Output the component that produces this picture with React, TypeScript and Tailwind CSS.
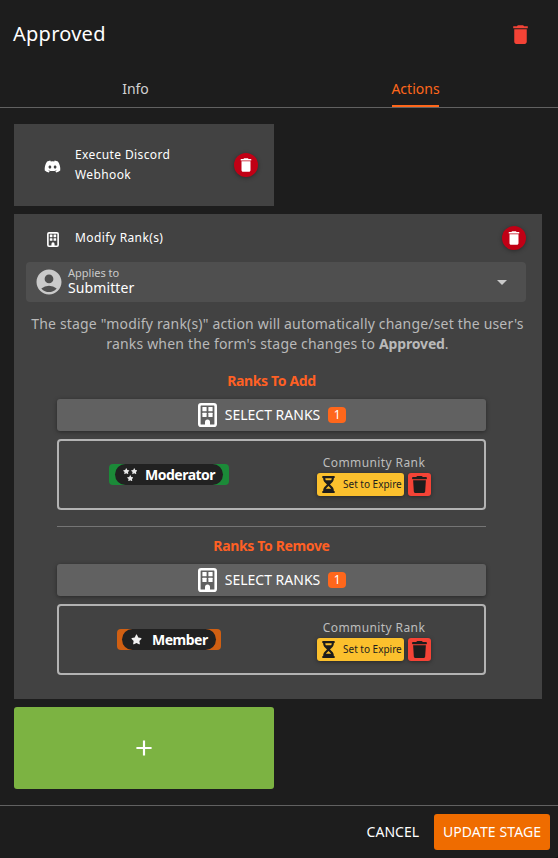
import type { ReactNode } from "react";
import { FaDiscord, FaTrash, FaHourglassHalf, FaStar } from "react-icons/fa6";
import { MdDelete, MdAccountCircle, MdArrowDropDown, MdAdd } from "react-icons/md";

function BuildingIcon({ className }: { className: string }) {
  return (
    <svg viewBox="0 0 19 24" className={className} fill="currentColor">
      <rect x="1.3" y="1.3" width="16.4" height="21.4" rx="1.8" fill="none" stroke="currentColor" strokeWidth="2.6" />
      <rect x="4.4" y="4" width="4.2" height="4.2" rx="0.5" />
      <rect x="10.4" y="4" width="4.2" height="4.2" rx="0.5" />
      <rect x="4.4" y="9.8" width="4.2" height="4.2" rx="0.5" />
      <rect x="10.4" y="9.8" width="4.2" height="4.2" rx="0.5" />
      <path d="M7 23v-4a2.5 2.5 0 0 1 5 0v4z" />
    </svg>
  );
}

function RoundDelete() {
  return (
    <button className="flex size-6 shrink-0 items-center justify-center rounded-full bg-[#c10015] pr-px text-white shadow-[0_1px_4px_rgba(0,0,0,0.35)]">
      <MdDelete className="size-[18px]" />
    </button>
  );
}

function Moderator() {
  return (
    <div className="flex h-[21px] w-[120px] justify-center rounded-[4px] bg-[#1b8a38]">
      <div className="flex w-[108px] items-center rounded-full bg-[#212121] pl-[8px]">
        <div className="flex w-[14px] flex-col items-center text-[6.5px] text-[#e8e8e8]">
          <div className="flex gap-px">
            <FaStar />
            <FaStar />
          </div>
          <FaStar />
        </div>
        <span className="ml-[8px] text-[14px] font-bold tracking-[-0.5px] text-white">Moderator</span>
      </div>
    </div>
  );
}

function Member() {
  return (
    <div className="flex h-[21px] w-[104px] justify-center rounded-[4px] bg-[#d05f12]">
      <div className="flex w-[94px] items-center rounded-full bg-[#212121] pl-[9px]">
        <FaStar className="text-[11px] text-[#f0f0f0]" />
        <span className="ml-[10px] text-[14px] font-bold tracking-[-0.5px] text-white">Member</span>
      </div>
    </div>
  );
}

function RankSection({ title, children }: { title: string; children: ReactNode }) {
  return (
    <section>
      <h3 className="h-5 text-center text-[14px] leading-5 font-bold tracking-[-0.35px] text-[#ff6024]">{title}</h3>
      <button className="mt-2 flex h-8 w-full items-center justify-center rounded-[3px] bg-[#616161] pl-px text-[14px] text-white shadow-[0_1px_4px_rgba(0,0,0,0.4)]">
        <BuildingIcon className="h-6 w-[19px]" />
        <span className="ml-2 pb-[2px]">SELECT RANKS</span>
        <span className="ml-2 flex h-4 w-[18px] items-center justify-center rounded-[4px] bg-[#ff671b] text-[12px]">1</span>
      </button>
      <div className="mt-2 grid h-[71px] grid-cols-[220px_1fr] items-center rounded-[4px] border-2 border-[#b3b3b3]">
        <div className="flex justify-center">{children}</div>
        <div className="flex w-[190px] flex-col items-center">
          <div className="h-[20px] text-[12px] leading-[20px] tracking-[0.4px] text-[#bdbdbd]">Community Rank</div>
          <div className="mb-px flex gap-1">
            <button className="flex h-[23px] w-[87px] items-center rounded-[3px] bg-[#fbc02d] pl-[5px] text-[#1d1d1d] shadow-[0_1px_4px_rgba(0,0,0,0.4)]">
              <FaHourglassHalf className="h-[17px] w-[13px]" />
              <span className="ml-2 text-[10px] whitespace-nowrap">Set to Expire</span>
            </button>
            <button className="flex h-[23px] w-[23px] items-center justify-center rounded-[3px] bg-[#f44336] text-[#1d1d1d] shadow-[0_1px_4px_rgba(0,0,0,0.4)]">
              <FaTrash className="h-[17px] w-[15px]" />
            </button>
          </div>
        </div>
      </div>
    </section>
  );
}

export default function App() {
  return (
    <div className="h-[858px] w-[558px] bg-[#101010]">
      <div className="flex h-[858px] w-[558px] flex-col overflow-hidden rounded-br-[4px] bg-[#1d1d1d] font-['Noto_Sans',sans-serif] text-white">
        <header className="flex h-[68px] shrink-0 items-center justify-between pr-[25px] pl-[13px]">
          <h1 className="text-[20px] leading-8 tracking-[0.25px]">Approved</h1>
          <MdDelete className="size-[25px] text-[#f44336]" />
        </header>
        <nav className="flex h-10 shrink-0 border-b border-[#616161] text-[14px] text-[#d2d2d2]">
          <div className="flex w-[271px] items-center justify-center pt-[2px]">Info</div>
          <div className="flex flex-1 justify-center pl-[2px]">
            <div className="flex w-[47px] items-center justify-center border-b-2 border-[#ff671b] pt-1 whitespace-nowrap text-[#ff671b]">Actions</div>
          </div>
        </nav>
        <main className="flex h-[697px] shrink-0 flex-col gap-2 px-[14px] pt-4 pr-4">
          <div className="flex h-[82px] w-[260px] shrink-0 items-center bg-[#424242] pr-4 pl-[30px]">
            <FaDiscord className="mt-[2px] size-[17px]" />
            <div className="ml-[14px] flex-1 text-[12px] leading-5 tracking-[0.38px]">
              Execute Discord
              <br />
              Webhook
            </div>
            <RoundDelete />
          </div>
          <div className="h-[485px] shrink-0 bg-[#424242] px-3 pt-3">
            <div className="flex h-6 items-center pr-1 pl-[21px]">
              <BuildingIcon className="mt-[2px] h-[15px] w-[12px]" />
              <span className="ml-4 flex-1 text-[12px] tracking-[0.38px]">Modify Rank(s)</span>
              <RoundDelete />
            </div>
            <div className="mt-3 flex h-10 w-[500px] items-center rounded-[4px] bg-[#4f4f4f] pr-3 pl-2">
              <MdAccountCircle className="size-[30px] text-[#cacaca]" />
              <div className="ml-[4px] flex-1 pb-[4px]">
                <div className="text-[11px] leading-[15px] text-[#cacaca]">Applies to</div>
                <div className="text-[14px] leading-[15px] tracking-[0.1px]">Submitter</div>
              </div>
              <MdArrowDropDown className="size-6 text-[#cacaca]" />
            </div>
            <p className="mt-3 w-[503px] text-center text-[14px] leading-5 tracking-[0.18px] whitespace-nowrap text-[#b9b9b9]">
              The stage "modify rank(s)" action will automatically change/set the user's
              <br />
              ranks when the form's stage changes to <b className="tracking-[-0.15px]">Approved</b>.
            </p>
            <div className="mt-[17px] ml-[31px] w-[429px]">
              <RankSection title="Ranks To Add">
                <Moderator />
              </RankSection>
              <hr className="mt-4 mb-[9px] border-[#757575]" />
              <RankSection title="Ranks To Remove">
                <Member />
              </RankSection>
            </div>
          </div>
          <button className="flex h-[82px] w-[260px] shrink-0 items-center justify-center rounded-[3px] bg-[#7cb342] pr-px">
            <MdAdd className="size-[26px]" />
          </button>
        </main>
        <footer className="flex flex-1 items-start justify-end border-t border-[#616161] pt-2 pr-2 text-[14px]">
          <button className="h-9 pr-[15px] pb-[2px] pl-4">CANCEL</button>
          <button className="h-9 w-[116px] rounded-[3px] bg-[#ef6c00] pb-[2px] tracking-[0.1px] whitespace-nowrap">UPDATE STAGE</button>
        </footer>
      </div>
    </div>
  );
}
